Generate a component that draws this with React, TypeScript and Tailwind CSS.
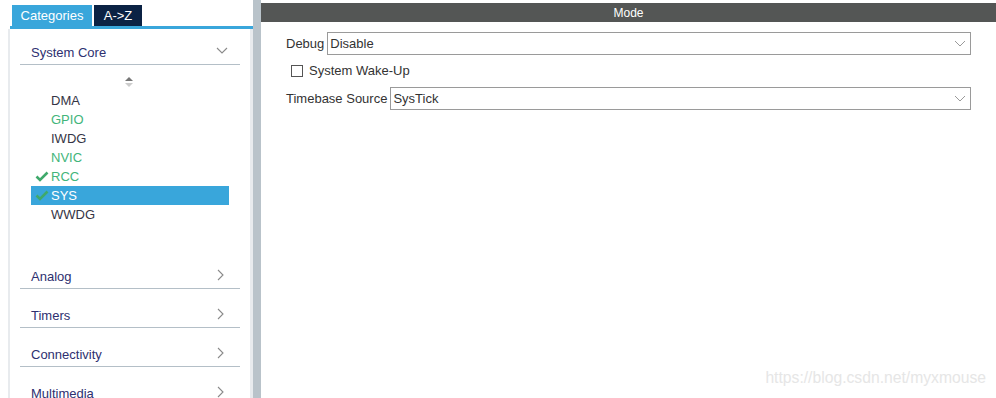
import React from "react";

const ITEMS = [
  { name: "DMA", green: false, checked: false },
  { name: "GPIO", green: true, checked: false },
  { name: "IWDG", green: false, checked: false },
  { name: "NVIC", green: true, checked: false },
  { name: "RCC", green: true, checked: true },
  { name: "SYS", green: false, checked: true, selected: true },
  { name: "WWDG", green: false, checked: false },
];

const CATEGORIES = ["Analog", "Timers", "Connectivity", "Multimedia"];

function ChevronDown({ className = "" }: { className?: string }) {
  return (
    <svg width="12" height="7" viewBox="0 0 12 7" className={className}>
      <polyline points="1,1 6,6 11,1" fill="none" stroke="#8a8a8a" strokeWidth="1.1" />
    </svg>
  );
}

function ChevronRight() {
  return (
    <svg width="7" height="12" viewBox="0 0 7 12">
      <polyline points="1,1 6,6 1,11" fill="none" stroke="#8a8a8a" strokeWidth="1.1" />
    </svg>
  );
}

function Check() {
  return (
    <svg width="14" height="11" viewBox="0 0 14 11">
      <polyline points="1.5,5.5 5,9 12.5,1.5" fill="none" stroke="#3fa96b" strokeWidth="2.6" />
    </svg>
  );
}

function Select({ value }: { value: string }) {
  return (
    <div className="flex-1 h-[23px] border border-[#9a9a9a] flex items-center justify-between pl-[2px] pr-[4px] text-[13px] text-[#333]">
      <span>{value}</span>
      <svg width="12" height="7" viewBox="0 0 12 7">
        <polyline points="1,1 6,6 11,1" fill="none" stroke="#9a9a9a" strokeWidth="1" />
      </svg>
    </div>
  );
}

export default function App() {
  return (
    <div
      className="relative w-[996px] h-[398px] flex bg-white overflow-hidden"
      style={{ fontFamily: '"Liberation Sans", Arial, sans-serif' }}
    >
      {/* left tree */}
      <div className="w-[253px] flex flex-col pl-[8px]">
        <div className="shrink-0 flex pt-[5px] pl-[4px] h-[26px] gap-[2px] text-[13px] text-white">
          <div className="w-[80px] bg-[#39a6db] flex items-center justify-center">Categories</div>
          <div className="w-[48px] bg-[#0b2244] flex items-center justify-center">A-&gt;Z</div>
        </div>
        <div className="shrink-0 ml-[2px] h-[3px] bg-[#39a6db]" />
        <div className="flex-1 min-h-0 overflow-hidden border-l-2 border-r-[3px] border-[#e8ebee] px-[10px]">
          <div className="h-[36px] flex items-end justify-between pb-[2px] pl-[11px] pr-[12px] border-b border-[#b4bfc7]">
            <span className="text-[13px] text-[#2e3070]">System Core</span>
            <ChevronDown className="mb-[8px]" />
          </div>
          <div className="h-[26px] flex justify-center pt-[11px]">
            <svg width="8" height="12" viewBox="0 0 8 12" className="mr-[2px]">
              <polygon points="4,1 8,5 0,5" fill="#777" />
              <polygon points="0,7 8,7 4,11" fill="#ccc" />
            </svg>
          </div>
          <div className="pl-[11px] mb-[26px]">
            {ITEMS.map((it) => (
              <div
                key={it.name}
                className={`w-[198px] h-[19px] flex items-center text-[13px] ${
                  it.selected ? "bg-[#39a6db] text-white" : it.green ? "text-[#42b57a]" : "text-[#353545]"
                }`}
              >
                <div className="w-[20px] flex justify-center pl-[2px]">{it.checked && <Check />}</div>
                <span>{it.name}</span>
              </div>
            ))}
          </div>
          {CATEGORIES.map((c) => (
            <div
              key={c}
              className="h-[39px] flex items-end justify-between pb-[2px] pl-[11px] pr-[16px] border-b border-[#b4bfc7]"
            >
              <span className="text-[13px] text-[#2e3070]">{c}</span>
              <div className="mb-[5px]">
                <ChevronRight />
              </div>
            </div>
          ))}
        </div>
      </div>

      {/* splitter */}
      <div className="w-[8px] bg-[#b9c3ca]" />

      {/* right mode panel */}
      <div className="flex-1 flex flex-col pt-[3px]">
        <div className="h-[19px] bg-[#545655] text-white text-[12px] flex items-center justify-center">Mode</div>
        <div className="px-[25px] pt-[10px] flex flex-col text-[13px] text-[#333]">
          <div className="flex items-center gap-[3px]">
            <span>Debug</span>
            <Select value="Disable" />
          </div>
          <div className="h-[32px] flex items-center pl-[5px] gap-[6px]">
            <div className="w-[12px] h-[12px] border border-[#555] bg-white" />
            <span>System Wake-Up</span>
          </div>
          <div className="flex items-center gap-[3px]">
            <span>Timebase Source</span>
            <Select value="SysTick" />
          </div>
        </div>
      </div>

      {/* watermark */}
      <div className="absolute right-[10px] bottom-[8px] text-[15.7px] text-[#e6e6e6]">
        https://blog.csdn.net/myxmouse
      </div>
    </div>
  );
}
